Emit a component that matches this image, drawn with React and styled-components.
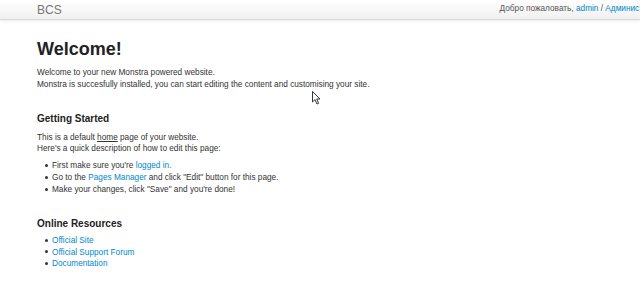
import styled, { createGlobalStyle } from 'styled-components'

const GlobalStyle = createGlobalStyle`
    html, body {
        margin:0;
        padding:0;
        background:#fff;
        overflow:hidden;
    }
    body {
        width:640px;
        height:286px;
        font-family:"Liberation Sans", Arial, sans-serif;
        color:#333;
        font-size:8.25px;
        line-height:11.5px;
    }
`

function App() {
    return (
        <Page>
            <GlobalStyle />
            <Navbar>
                <NavInner>
                    <Brand>BCS</Brand>
                    <UserBox>
                        Добро пожаловать, <Link href="#">admin</Link> / <Link href="#">Администрирование</Link>
                    </UserBox>
                </NavInner>
            </Navbar>
            <Container>
                <Title>Welcome!</Title>
                <Text>
                    Welcome to your new Monstra powered website.<br />
                    Monstra is succesfully installed, you can start editing the content and customising your site.
                </Text>
                <SubTitle>Getting Started</SubTitle>
                <Text $tight>
                    This is a default <Plain href="#">home</Plain> page of your website.<br />
                    Here's a quick description of how to edit this page:
                </Text>
                <List>
                    <Item>First make sure you're <Link href="#">logged in.</Link></Item>
                    <Item>Go to the <Link href="#">Pages Manager</Link> and click "Edit" button for this page.</Item>
                    <Item>Make your changes, click "Save" and you're done!</Item>
                </List>
                <SubTitle $after>Online Resources</SubTitle>
                <List $close>
                    <Item $small><Link href="#">Official Site</Link></Item>
                    <Item $small><Link href="#">Official Support Forum</Link></Item>
                    <Item $small><Link href="#">Documentation</Link></Item>
                </List>
            </Container>
            <Cursor width="10" height="14" viewBox="0 0 10 14">
                <path d="M0.5 0.5 L0.5 11 L3 8.6 L5 13 L6.6 12.3 L4.7 8 L8 8 Z" fill="#fff" stroke="#222" strokeWidth="0.9" strokeLinejoin="round" />
            </Cursor>
        </Page>
    )
}

const Page = styled.div`
    position:relative;
    width:640px;
    height:286px;
    overflow:hidden;
`

const Navbar = styled.div`
    height:19px;
    background:linear-gradient(to bottom, #ffffff, #f0f0f0);
    border-bottom:1px solid #d8d8d8;
    box-shadow:0 1px 3px rgba(0,0,0,0.08);
`

const NavInner = styled.div`
    width:647px;
    padding-left:37px;
    height:100%;
    display:flex;
    align-items:center;
    justify-content:space-between;
    box-sizing:content-box;
`

const Brand = styled.span`
    font-size:12px;
    color:#777;
    line-height:16px;
`

const UserBox = styled.span`
    color:#555;
    font-size:8.25px;
    white-space:nowrap;
    margin-top:-1px;
`

const Container = styled.div`
    padding-left:37px;
`

const Title = styled.h1`
    margin:18px 0 0;
    font-size:18px;
    line-height:22px;
    font-weight:bold;
    color:#222;
`

const Text = styled.p`
    margin:${p => p.$tight ? '5.5px 0 0' : '7px 0 0'};
`

const SubTitle = styled.h3`
    margin:${p => p.$after ? '21px 0 0' : '22px 0 0'};
    font-size:10px;
    line-height:14px;
    font-weight:bold;
    color:#222;
`

const List = styled.ul`
    margin:${p => p.$close ? '4px 0 0' : '5.5px 0 0'};
    padding-left:15px;
    list-style:none;
`

const Item = styled.li`
    line-height:${p => p.$small ? '11.5px' : '12px'};
    &::before {
        content:'';
        display:inline-block;
        width:3px;
        height:3px;
        border-radius:50%;
        background:#333;
        margin-left:-7px;
        margin-right:4px;
        vertical-align:1.5px;
    }
`

const Link = styled.a`
    color:#0088cc;
    text-decoration:none;
`

const Plain = styled.a`
    color:#333;
    text-decoration:underline;
`

const Cursor = styled.svg`
    position:absolute;
    left:312px;
    top:91px;
`

export default App
